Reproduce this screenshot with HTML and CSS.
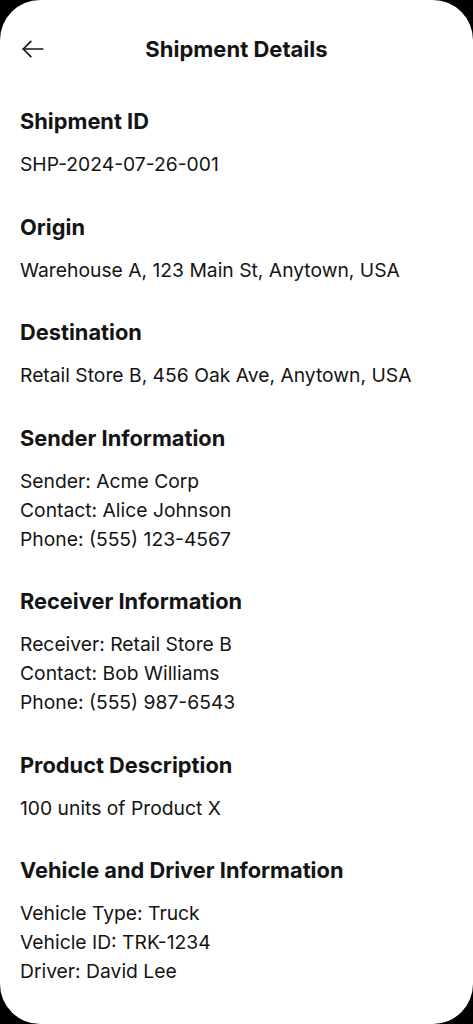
FILE: index.html
```html
<!DOCTYPE html>
<html lang="en">
<head>
  <meta charset="UTF-8">
  <meta name="viewport" content="width=device-width, initial-scale=1.0">
  <title>Shipment Details</title>
  <link rel="stylesheet" href="styles.css">
</head>
<body>

  <div class="screen">
    <header class="topbar">
      <button class="back-btn" aria-label="Back">
        <svg width="26" height="26" viewBox="0 0 24 24" fill="none" stroke="#141414" stroke-width="1.6" stroke-linecap="round" stroke-linejoin="round">
          <path d="M21 12H3"/>
          <path d="M10 5l-7 7 7 7"/>
        </svg>
      </button>
      <h1>Shipment Details</h1>
    </header>

    <main class="details">
      <section class="section">
        <h2>Shipment ID</h2>
        <p>SHP-2024-07-26-001</p>
      </section>

      <section class="section">
        <h2>Origin</h2>
        <p>Warehouse A, 123 Main St, Anytown, USA</p>
      </section>

      <section class="section">
        <h2>Destination</h2>
        <p>Retail Store B, 456 Oak Ave, Anytown, USA</p>
      </section>

      <section class="section">
        <h2>Sender Information</h2>
        <p>Sender: Acme Corp</p>
        <p>Contact: Alice Johnson</p>
        <p>Phone: (555) 123-4567</p>
      </section>

      <section class="section">
        <h2>Receiver Information</h2>
        <p>Receiver: Retail Store B</p>
        <p>Contact: Bob Williams</p>
        <p>Phone: (555) 987-6543</p>
      </section>

      <section class="section">
        <h2>Product Description</h2>
        <p>100 units of Product X</p>
      </section>

      <section class="section">
        <h2>Vehicle and Driver Information</h2>
        <p>Vehicle Type: Truck</p>
        <p>Vehicle ID: TRK-1234</p>
        <p>Driver: David Lee</p>
      </section>
    </main>
  </div>

</body>
</html>
```

FILE: styles.css
```css
html, body {
  margin: 0;
  padding: 0;
  height: 100%;
}

body {
  font-family: 'Inter', 'Noto Sans', sans-serif;
  background-color: #000;
  color: #141414;
}

.screen {
  min-height: 1024px;
  box-sizing: border-box;
  background-color: #fff;
  border-radius: 40px;
  padding: 0 20px;
  overflow: hidden;
}

.topbar {
  display: flex;
  align-items: center;
  justify-content: center;
  position: relative;
  height: 48px;
  padding-top: 25px;
}

.back-btn {
  position: absolute;
  left: 0;
  top: 36px;
  background: none;
  border: none;
  padding: 0;
  margin: 0;
  cursor: pointer;
  display: flex;
}

.topbar h1 {
  margin: 0;
  font-size: 22px;
  font-weight: 700;
}

.details {
  padding-top: 34px;
}

.section {
  margin-bottom: 33.5px;
}

.section h2 {
  margin: 0 0 15px;
  font-size: 21.8px;
  line-height: 28px;
  font-weight: 700;
}

.section p {
  margin: 0;
  font-size: 19.3px;
  line-height: 29px;
  font-weight: 400;
}
```
